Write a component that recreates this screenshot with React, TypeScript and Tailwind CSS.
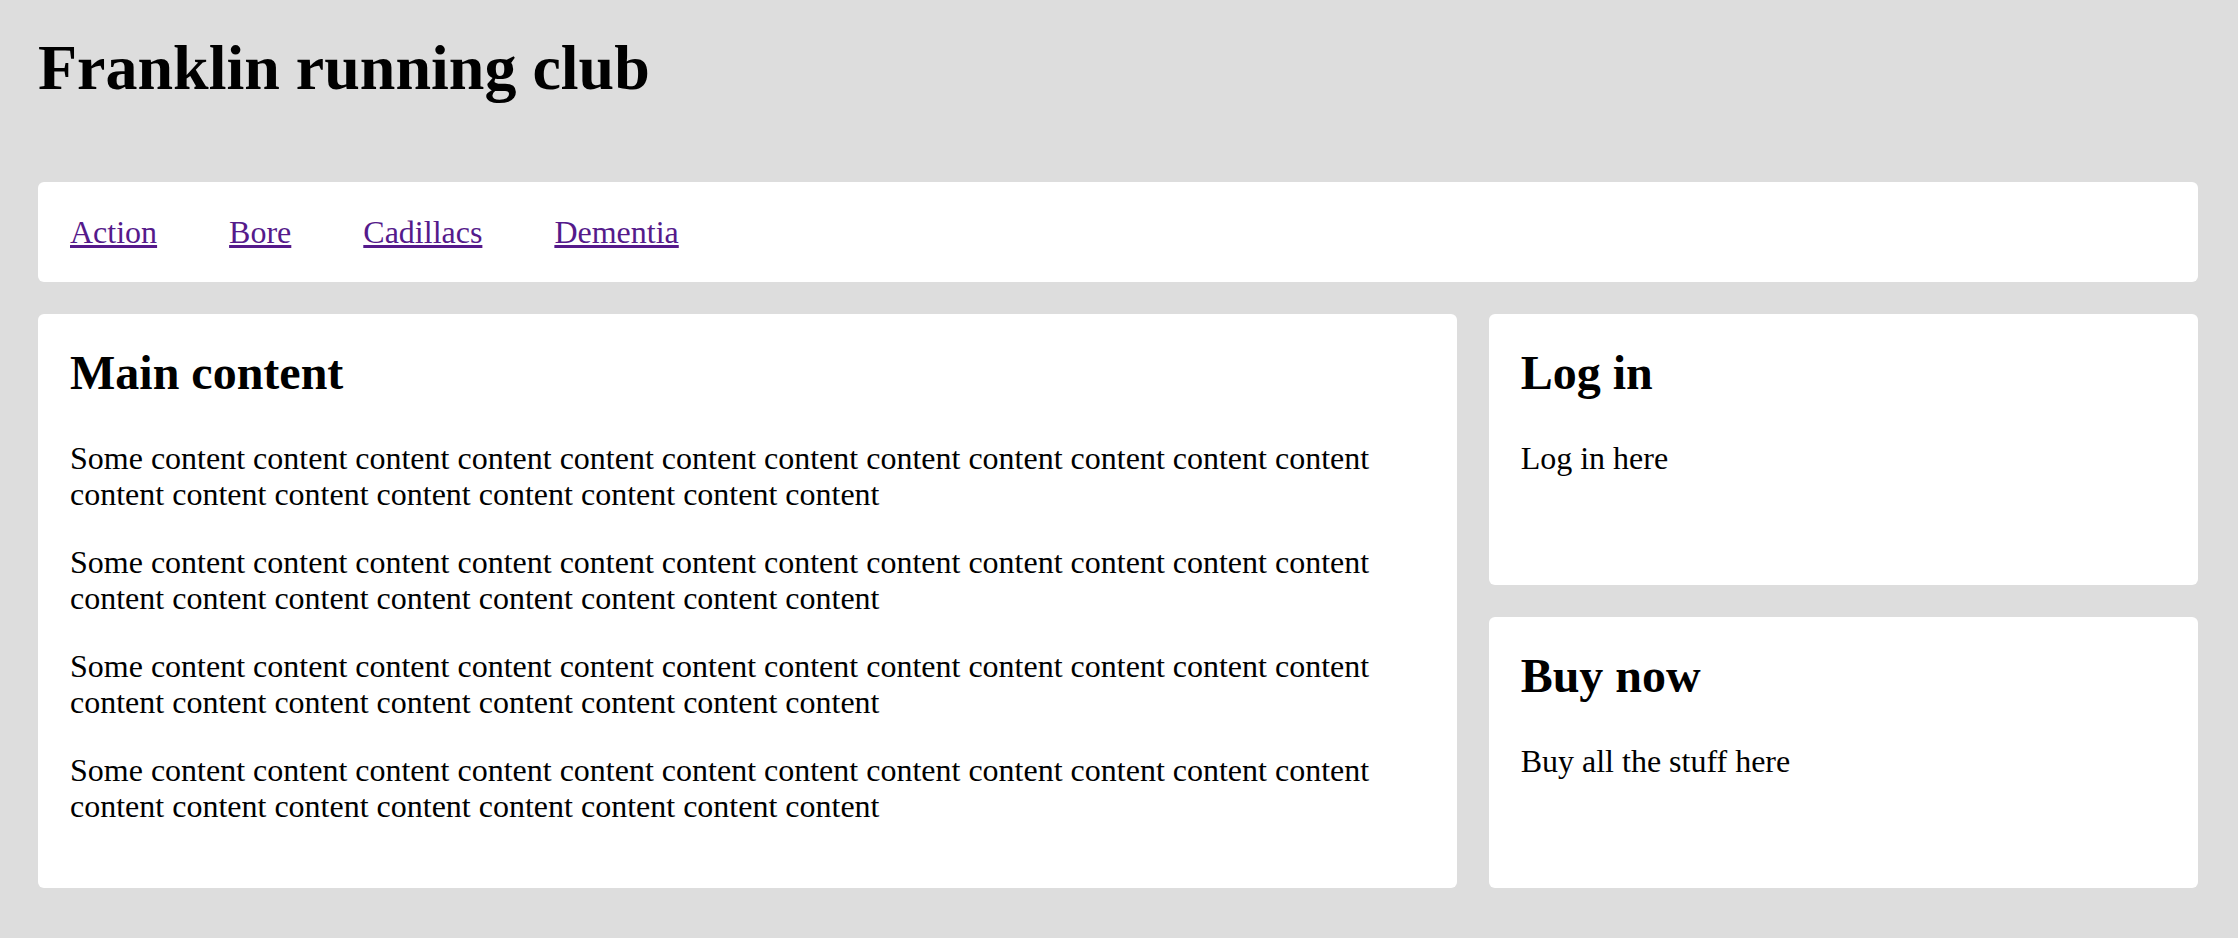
import React from "react";

const links = ["Action", "Bore", "Cadillacs", "Dementia"];

function Card({ title, children, className = "" }: { title: string; children: React.ReactNode; className?: string }) {
  return (
    <section className={"rounded-[6px] bg-white p-[32px] " + className}>
      <h2 className="text-[48px] leading-[54px] font-bold mb-[40px]">{title}</h2>
      {children}
    </section>
  );
}

export default function App() {
  const para =
    "Some content content content content content content content content content content content content content content content content content content content content";

  return (
    <div className="min-h-screen bg-[#dddddd] pl-[38px] pr-[40px] pt-[32px] pb-[48px] font-['Liberation_Serif',serif] text-black">
      <h1 className="text-[64px] leading-[72px] font-bold">Franklin running club</h1>

      {/* Nav */}
      <nav className="mt-[78px] rounded-[6px] bg-white p-[32px] text-[32px] leading-[36px]">
        <ul className="flex gap-[72px]">
          {links.map((l) => (
            <li key={l}>
              <a href="#" className="text-[#551a8b] underline">
                {l}
              </a>
            </li>
          ))}
        </ul>
      </nav>

      {/* Content grid */}
      <div className="mt-[32px] grid grid-cols-[2fr_1fr] grid-rows-2 gap-[32px] text-[32px] leading-[36px]">
        <Card title="Main content" className="row-span-2">
          <div className="flex flex-col gap-[32px] pb-[32px]">
            {[0, 1, 2, 3].map((i) => (
              <p key={i}>{para}</p>
            ))}
          </div>
        </Card>
        <Card title="Log in">
          <p>Log in here</p>
        </Card>
        <Card title="Buy now">
          <p>Buy all the stuff here</p>
        </Card>
      </div>
    </div>
  );
}
